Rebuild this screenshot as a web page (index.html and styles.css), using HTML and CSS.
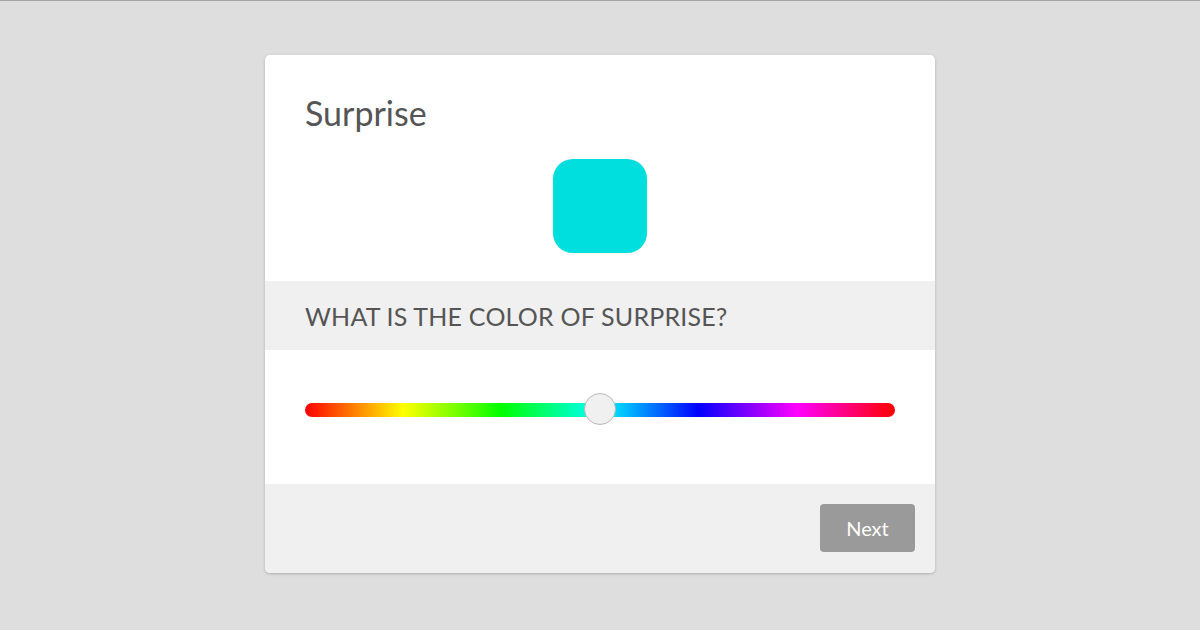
FILE: index.html
```html
<!DOCTYPE html>
<html lang="en">
<head>
<meta charset="utf-8">
<title>Surprise</title>
<link rel="stylesheet" href="styles.css">
</head>
<body>
<main class="card">
  <section class="head">
    <h1 class="title">Surprise</h1>
    <div class="swatch"></div>
  </section>
  <section class="question">
    <h2 class="question-text">WHAT IS THE COLOR OF SURPRISE?</h2>
  </section>
  <section class="slider-area">
    <div class="track">
      <span class="thumb"></span>
    </div>
  </section>
  <footer class="footer">
    <button class="next" type="button">Next</button>
  </footer>
</main>
</body>
</html>
```
FILE: styles.css
```css
html, body {
  margin: 0;
  padding: 0;
}
body {
  background: #dedede;
  border-top: 1px solid #a6a6a6;
  height: 629px;
  font-family: Lato, "Open Sans", "Liberation Sans", sans-serif;
  color: #555;
}
.card {
  width: 670px;
  margin: 54px auto 0;
  background: #fff;
  border-radius: 5px;
  box-shadow: 0 1px 3px rgba(0, 0, 0, 0.22);
  overflow: hidden;
}
.head {
  padding: 38px 40px 28px;
  display: flex;
  flex-direction: column;
}
.title {
  margin: 0;
  font-size: 34px;
  line-height: 40px;
  font-weight: 400;
  color: #555;
}
.swatch {
  align-self: center;
  margin-top: 26px;
  width: 94px;
  height: 94px;
  border-radius: 20px;
  background: #00dede;
  box-shadow: 0 0 2px rgba(0, 0, 0, 0.08);
}
.question {
  height: 69px;
  background: #f0f0f0;
  padding: 0 40px;
  display: flex;
  align-items: center;
}
.question-text {
  margin: 0;
  font-size: 25px;
  font-weight: 400;
  color: #555;
  letter-spacing: 0.2px;
}
.slider-area {
  padding: 53px 40px 67px;
}
.track {
  position: relative;
  height: 14px;
  border-radius: 7px;
  background: linear-gradient(to right, #ff0000 0%, #ffff00 16.67%, #00ff00 33.33%, #00ffff 50%, #0000ff 66.67%, #ff00ff 83.33%, #ff0000 100%);
}
.thumb {
  position: absolute;
  left: 50%;
  top: 50%;
  width: 30px;
  height: 30px;
  margin: -17px 0 0 -16px;
  border-radius: 50%;
  background: #f0f0f0;
  border: 1px solid #b8b8b8;
}
.footer {
  background: #f0f0f0;
  padding: 20px;
  height: 49px;
  display: flex;
  justify-content: flex-end;
}
.next {
  width: 95px;
  height: 48px;
  border: 0;
  border-radius: 4px;
  background: #9a9a9a;
  color: #fff;
  font-family: Lato, "Open Sans", "Liberation Sans", sans-serif;
  font-size: 20px;
  padding: 0;
}
```
